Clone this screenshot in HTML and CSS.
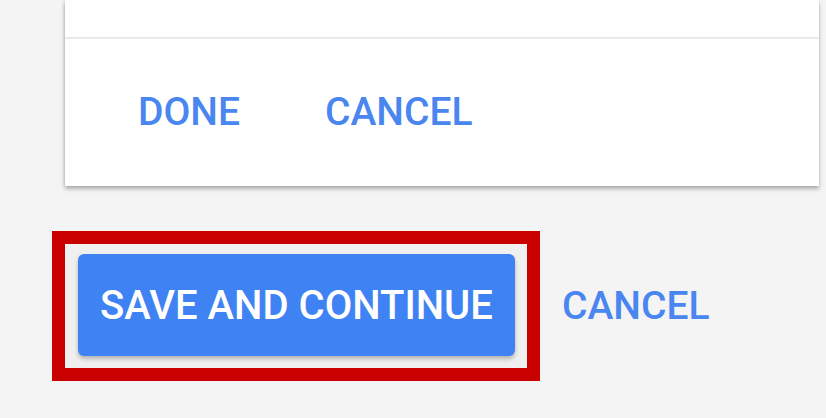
FILE: index.html
```html
<!DOCTYPE html>
<html lang="en">
<head>
    <meta charset="UTF-8">
    <meta name="viewport" content="width=device-width, initial-scale=1.0">
    <title>Save and continue</title>
    <link rel="stylesheet" href="styles.css">
</head>
<body>
    <div class="card">
        <div class="card-top"></div>
        <div class="card-actions">
            <span class="text-button">DONE</span>
            <span class="text-button">CANCEL</span>
        </div>
    </div>
    <div class="footer-actions">
        <div class="highlight">
            <button type="button" class="primary-button">SAVE AND CONTINUE</button>
        </div>
        <span class="text-button">CANCEL</span>
    </div>
</body>
</html>
```

FILE: styles.css
```css
body {
    margin: 0;
    height: 418px;
    overflow: hidden;
    background-color: #f4f4f4;
    font-family: Roboto, 'Liberation Sans', Arial, sans-serif;
}
.card {
    margin: 0 7px 0 65px;
    background: #fff;
    box-shadow: 0 3px 4px rgba(0, 0, 0, 0.28), -1px 0 3px rgba(0, 0, 0, 0.1);
}
.card-top {
    height: 37px;
    border-bottom: 2px solid #e9e9e9;
}
.card-actions {
    display: flex;
    align-items: center;
    gap: 85px;
    height: 147px;
    padding-left: 73px;
}
.text-button {
    color: #4a86f0;
    font-size: 39px;
    font-weight: 500;
    line-height: 1;
}
.footer-actions {
    display: flex;
    align-items: center;
    gap: 22px;
    margin-top: 45px;
    padding-left: 52px;
}
.highlight {
    border: 13px solid #c80000;
    padding: 10px 12px 12px 13px;
    background: #f0f0f0;
}
.primary-button {
    display: block;
    width: 437px;
    height: 102px;
    border: 0;
    border-radius: 6px;
    background: #3f82f3;
    color: #fff;
    font-family: Roboto, 'Liberation Sans', Arial, sans-serif;
    font-size: 40px;
    font-weight: 500;
    box-shadow: 0 3px 4px rgba(0, 0, 0, 0.25);
}
```
